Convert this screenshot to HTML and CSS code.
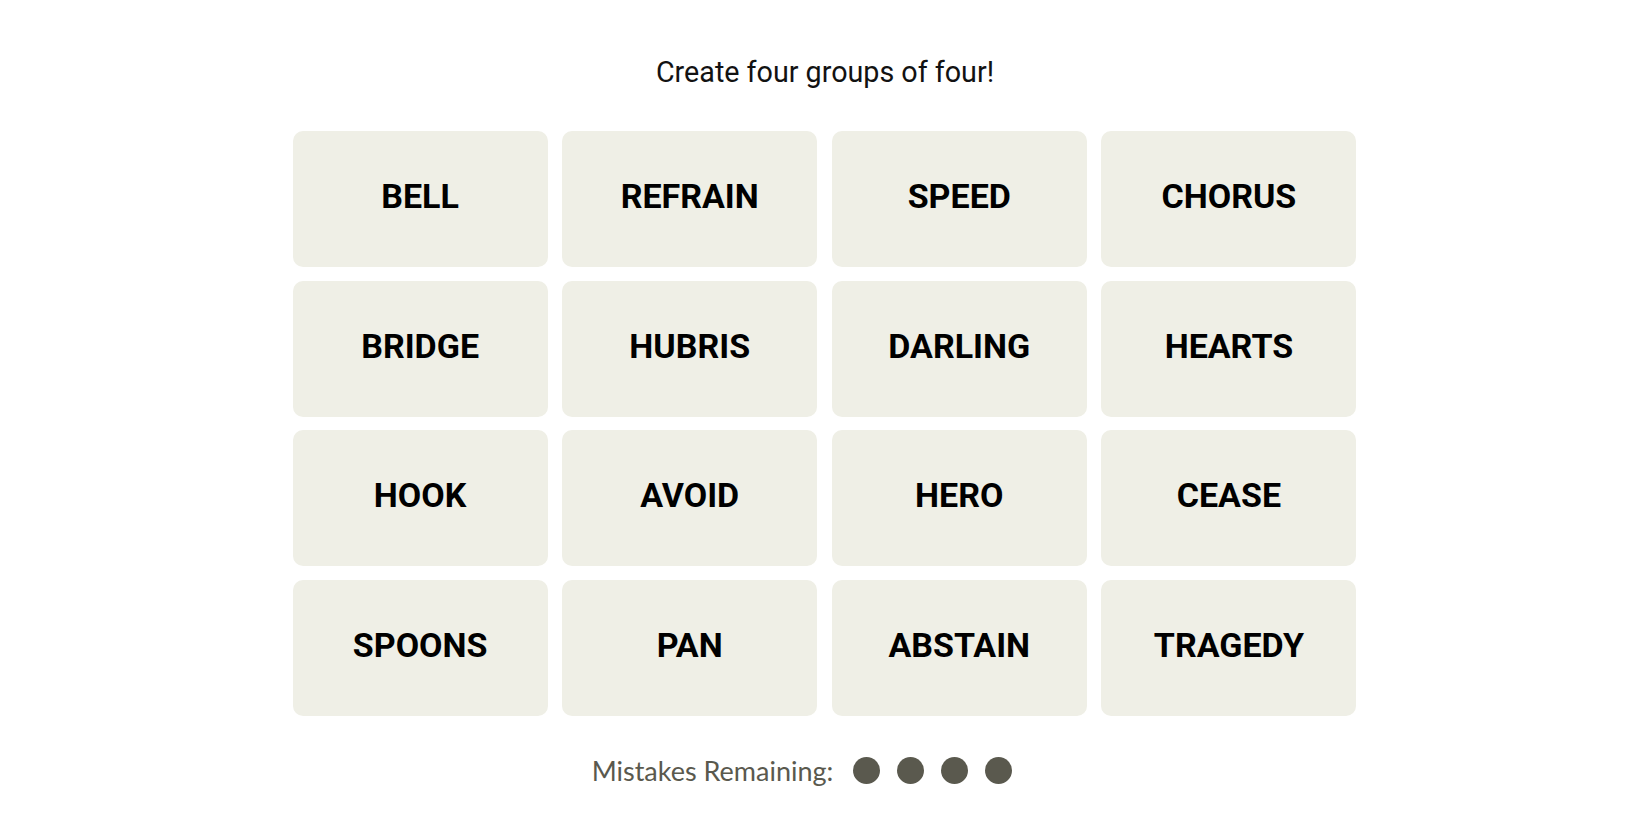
FILE: index.html
```html
<!DOCTYPE html>
<html lang="en">
<head>
<meta charset="utf-8">
<title>Connections</title>
<link rel="stylesheet" href="styles.css">
</head>
<body>
<main class="game">
  <p class="prompt">Create four groups of four!</p>
  <section class="board">
    <button class="tile">BELL</button>
    <button class="tile">REFRAIN</button>
    <button class="tile">SPEED</button>
    <button class="tile">CHORUS</button>
    <button class="tile">BRIDGE</button>
    <button class="tile">HUBRIS</button>
    <button class="tile">DARLING</button>
    <button class="tile">HEARTS</button>
    <button class="tile">HOOK</button>
    <button class="tile">AVOID</button>
    <button class="tile">HERO</button>
    <button class="tile">CEASE</button>
    <button class="tile">SPOONS</button>
    <button class="tile">PAN</button>
    <button class="tile">ABSTAIN</button>
    <button class="tile">TRAGEDY</button>
  </section>
  <div class="mistakes">
    <span class="mistakes-label">Mistakes Remaining:</span>
    <span class="dots">
      <span class="dot"></span>
      <span class="dot"></span>
      <span class="dot"></span>
      <span class="dot"></span>
    </span>
  </div>
</main>
</body>
</html>
```

FILE: styles.css
```css
html, body {
  margin: 0;
  padding: 0;
  background: #ffffff;
}

.game {
  display: flex;
  flex-direction: column;
  align-items: center;
  padding-top: 55px;
}

.prompt {
  margin: 0;
  font-family: Roboto, "Liberation Sans", sans-serif;
  font-size: 28.7px;
  line-height: 34px;
  font-weight: 400;
  color: #121212;
}

.board {
  margin-top: 42px;
  margin-right: 1px;
  display: grid;
  grid-template-columns: repeat(4, 255px);
  grid-auto-rows: 136px;
  column-gap: 14.6px;
  row-gap: 13.6px;
}

.tile {
  display: flex;
  align-items: center;
  justify-content: center;
  border: none;
  border-radius: 10px;
  background: #efefe6;
  padding: 0 0 6px 0;
  margin: 0;
  font-family: Roboto, "Liberation Sans", sans-serif;
  font-weight: 700;
  font-size: 34px;
  color: #000000;
  cursor: pointer;
}

.mistakes {
  margin-top: 40px;
  padding-right: 46px;
  display: flex;
  align-items: center;
  gap: 20px;
}

.mistakes-label {
  font-family: Lato, "Liberation Sans", sans-serif;
  font-size: 27px;
  line-height: 30px;
  color: #5a594e;
}

.dots {
  display: flex;
  gap: 17px;
}

.dot {
  width: 27px;
  height: 27px;
  border-radius: 50%;
  background: #5a594e;
}
```
